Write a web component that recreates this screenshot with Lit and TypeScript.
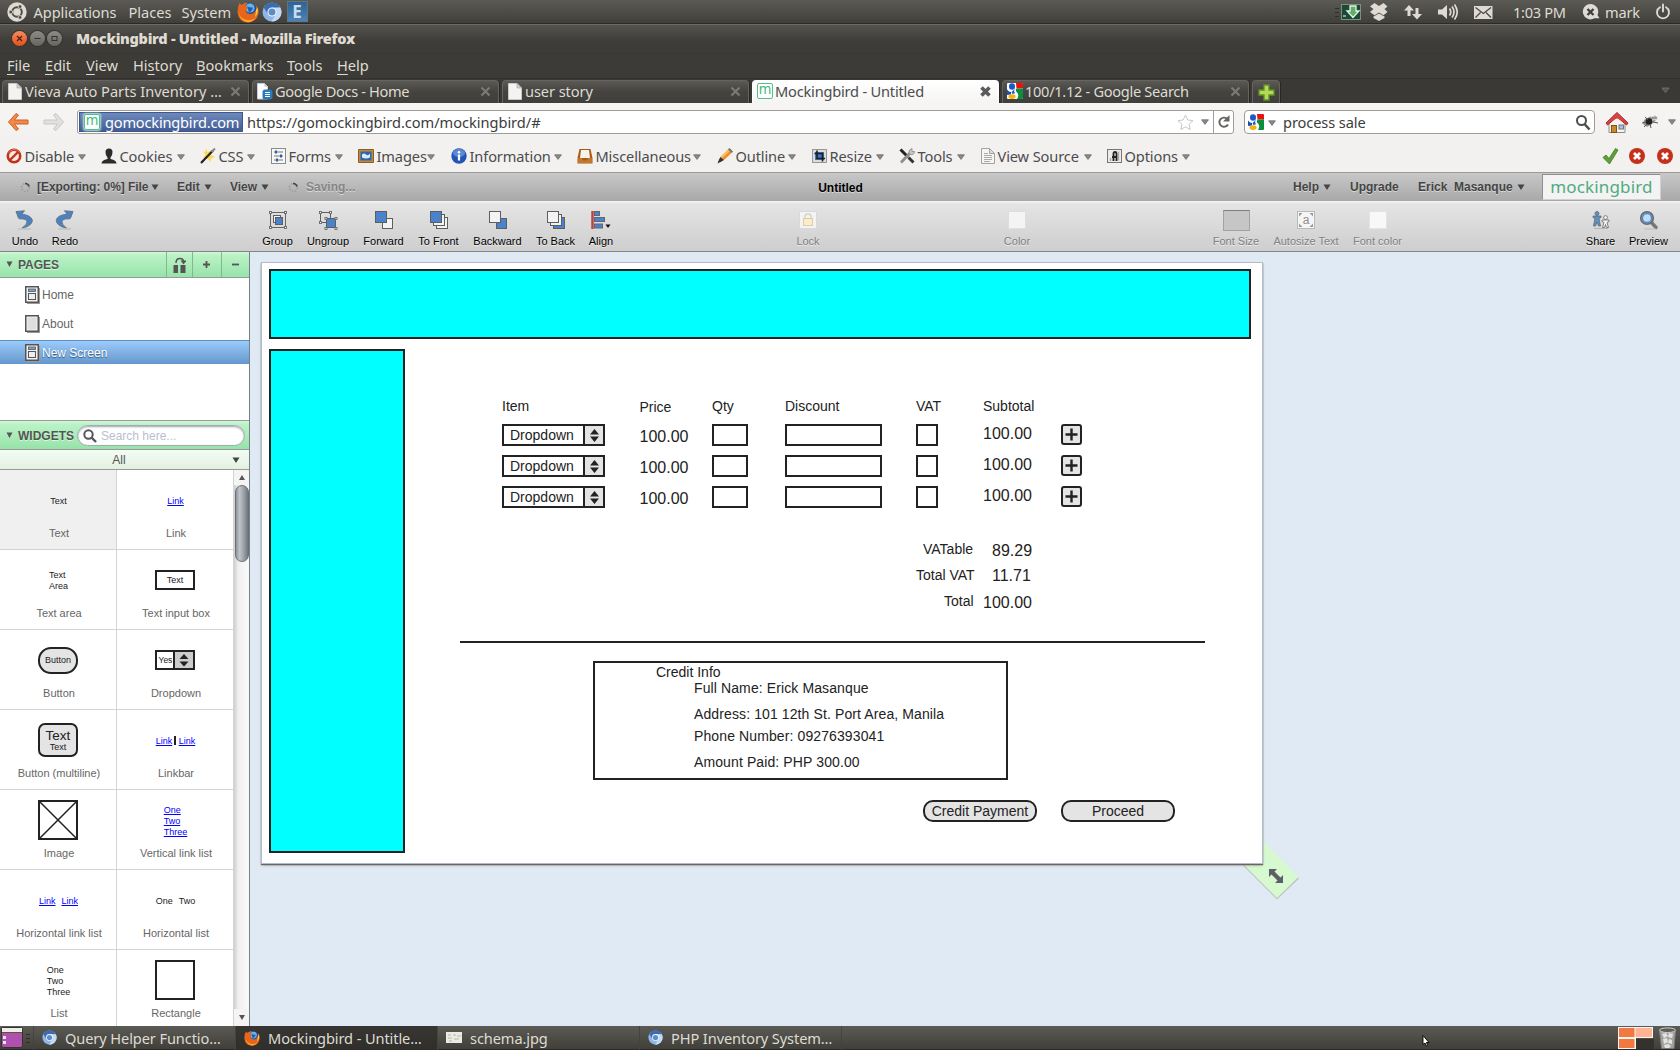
import { LitElement, html, svg, css, nothing } from "lit";
import { customElement } from "lit/decorators.js";
import { classMap } from "lit/directives/class-map.js";
import { styleMap } from "lit/directives/style-map.js";

const icon = (w: number, h: number, body: unknown, cls = "ic") =>
  html`<svg class=${cls} width=${w} height=${h} viewBox="0 0 ${w} ${h}">${body}</svg>`;

const caret = html`<svg class="caret" width="8" height="6" viewBox="0 0 8 6"><path d="M.6.8h6.8L4 5.4z" fill="#8a8a88" stroke="#6c6c6a" stroke-width=".8"/></svg>`;
const darkCaret = html`<svg class="dcaret" width="8" height="6" viewBox="0 0 8 6"><path d="M.5.5h7L4 6z" fill="#444"/></svg>`;

const firefox = (s: number) => html`<svg class="ic" width=${s} height=${s} viewBox="0 0 22 22">
  <circle cx="11.5" cy="10" r="8.6" fill="#1f4f9c"/><circle cx="13" cy="7" r="4.6" fill="#69b4e8"/>
  <path d="M10 5q3 2 6 1.500-1 4-4 5z" fill="#1d5fae"/>
  <path d="M2.500 2q1.500 2 2.200 1.800Q8 .8 11 2 8 3.500 8.600 5.600q2 .4 2.400 1.800-1.800.8-2.400 2 .4 2.600 3.600 3.400 4.400 1 7-3.800Q20 5 17.500 2.500q4.500 4 4 9.500-1 8-9.500 9.500Q2 22 .6 12 .2 7 2.500 2z" fill="#e8661b"/>
  <path d="M1.500 9q0 7 6 9.500 7 2.500 11.500-2.500-3 6-9.500 5Q1.500 18.500 1.500 9z" fill="#f9b02c"/>
  <path d="M20.500 6q1.500 6-2.500 10 1.200-4 .8-6.500z" fill="#fbc93f"/></svg>`;

const chromium = (s: number) => html`<svg class="ic" width=${s} height=${s} viewBox="0 0 20 20">
  <circle cx="10" cy="10" r="9.500" fill="#8fb6e4"/>
  <path d="M1.700 5.400A9.500 9.500 0 0 1 18.300 5.500L10 5.700 6 12z" fill="#3c6cb0"/>
  <path d="M18.300 5.500A9.500 9.500 0 0 1 9.500 19.500L14 12 10 5.700z" fill="#c3daf4"/>
  <circle cx="10" cy="10" r="4.600" fill="#f2f7fd"/><circle cx="10" cy="10" r="3.500" fill="#5d8ccb"/></svg>`;

const google = icon(16, 16, svg`<rect width="16" height="16" rx="1" fill="#fff"/>
  <path d="M9 0h6a1 1 0 0 1 1 1v4.500H9.500z" fill="#e8130c"/><path d="M9.500 5.500H16V15a1 1 0 0 1-1 1H10q2.500-4 0-6.500-2-2-.5-4z" fill="#0b8f3c"/>
  <path d="M0 6.500q2 2.500 4 2.500v2.500L0 12z" fill="#1550bd"/>
  <ellipse cx="5" cy="3.500" rx="3" ry="3.300" fill="#1c58c7"/><path d="M8 6q-2 3 .5 4l-3 1-1-2z" fill="#1c58c7"/>
  <ellipse cx="5" cy="13.600" rx="3.600" ry="2.300" fill="#f5b313"/>`);

const page = icon(14, 17, svg`<path d="M.5.500h8.500l4.500 4.500v11.500H.5z" fill="#f3f3f2" stroke="#c9c8c4"/><path d="M9 .5v4.500h4.500z" fill="#cfcecb" stroke="#aaa9a5" stroke-width=".7"/>`);
const docs = icon(16, 17, svg`<path d="M.5.500h7l3 3v12.500H.5z" fill="#fff" stroke="#ccd"/><path d="M7.500.5v3h3z" fill="#bbc"/>
  <rect x="5.500" y="6.500" width="10" height="10" rx="2.500" fill="#2a79b8"/><path d="M8 9.500h5M8 11.500h5M8 13.500h5" stroke="#fff"/>`);
const mark = html`<span class="m-ico">m</span>`;

const tabs = [
  { label: "Vieva Auto Parts Inventory …", ico: page, active: false, track: 0 },
  { label: "Google Docs - Home", ico: docs, active: false, track: -0.34 },
  { label: "user story", ico: page, active: false, track: -0.08 },
  { label: "Mockingbird - Untitled", ico: mark, active: true, track: -0.2 },
  { label: "100/1.12 - Google Search", ico: google, active: false, track: -0.3 },
];

const menus: [string, number, string, string][] = [
  ["", 38, "F", "ile"], ["", 41, "E", "dit"], ["", 47, "V", "iew"], ["Hi", 63, "s", "tory"],
  ["", 91, "B", "ookmarks"], ["", 50, "T", "ools"], ["", 40, "H", "elp"],
];

const devIcons = {
  disable: icon(16, 16, svg`<circle cx="8" cy="8" r="7.500" fill="#c2321c"/><circle cx="8" cy="8" r="4.900" fill="#f6e9e6"/><path d="M4 12 12 4" stroke="#c2321c" stroke-width="2.400"/><path d="M2.500 5Q4.500 1.500 8 1.500t5.500 3" fill="none" stroke="#e58473" stroke-width=".8"/>`),
  cookies: icon(16, 16, svg`<path d="M4.500 4Q4.500.5 8 .5t3.500 3.500Q11.500 8 9.500 9.500v1.500q6 1 6 4.500H.5q0-3.500 6-4.500V9.500Q4.500 8 4.500 4z" fill="#2b2b2a"/>`),
  css: icon(16, 16, svg`<path d="M6 0l1.500 4 5-1.500L11 7l4 2-4 1.500-.5 3.500L8 11l-5-1 2.500-3L3 3l2.500 1z" fill="#fbd955"/><path d="M1 15 13 2.500" stroke="#222" stroke-width="2.200"/><path d="M11.500 4 15 .5" stroke="#888" stroke-width="2"/>`),
  forms: icon(15, 16, svg`<rect x=".5" y=".5" width="14" height="15" fill="#f7f7f6" stroke="#8b8b88"/><path d="M3 4h9M3 8h9M3 12h9" stroke="#777"/><path d="M5 2.500v3M10 6.500v3M6 10.500v3" stroke="#2f5fae" stroke-width="2"/>`),
  images: icon(16, 14, svg`<rect width="16" height="14" rx="1" fill="#8b5d22"/><rect x="1" y="1" width="14" height="12" fill="#c08a3e"/><rect x="2.500" y="2.500" width="11" height="9" fill="#2c64ae"/><path d="M4 5.500q2-2 4 0t4-1v4q-4 2-8 0z" fill="#dbe8f7"/>`),
  information: icon(16, 16, svg`<circle cx="8" cy="8" r="7.700" fill="#2455b4"/><ellipse cx="8" cy="5" rx="6" ry="4" fill="#5d88d4"/><circle cx="8" cy="4.200" r="1.300" fill="#fff"/><path d="M8 6.500V12.500" stroke="#fff" stroke-width="2.200"/>`),
  misc: icon(16, 16, svg`<path d="M2.500 1h11l2 9v5.500H.5V10z" fill="#a65b18"/><path d="M4 2h8l1 8H3z" fill="#f8f3ea"/><path d="M1 10h4q0 2.500 3 2.500t3-2.500h4v5H1z" fill="#c4762c"/>`),
  outline: icon(16, 16, svg`<path d="M12 .5 15.500 4 7 12 3.500 9z" fill="#f08c1e"/><path d="M12 .5l1.700 1.700L5 10.500 3.500 9z" fill="#ffbb66"/><path d="M3.500 9 7 12l-2.500 1.500L.5 15.500l1.500-4z" fill="#333"/><path d="M11 1.500 12.500 0 16 3.500l-1.500 1.500z" fill="#777"/>`),
  resize: icon(15, 14, svg`<rect x=".5" y=".5" width="14" height="13" fill="#dcdcda" stroke="#999"/><rect x="3" y="3" width="9" height="8" fill="#3e76c4"/><path d="M5 1.500V9.500h8M2.500 4.500H10.500v8" fill="none" stroke="#1d1d1d" stroke-width="1.600"/>`),
  tools: icon(16, 16, svg`<path d="M1.500 1.500 9 9" stroke="#222" stroke-width="3"/><path d="M9.500 9.500l5 5" stroke="#333" stroke-width="3"/><path d="M2 14.500 11 5" stroke="#8e8e8c" stroke-width="2.800"/><path d="M10 5q-.5-3.500 3-4.500v3h2.500Q15 7.500 11 6.500z" fill="#c7c7c5" stroke="#888" stroke-width=".8"/>`),
  source: icon(14, 16, svg`<path d="M.5.500h8l5 5v10H.5z" fill="#f5f5f4" stroke="#a2a29e"/><path d="M8.500.5v5h5z" fill="#ddd" stroke="#a2a29e"/><path d="M3 5.500h4M3 7.500h8M3 9.500h8M3 11.500h8M3 13.500h6" stroke="#aaa"/>`),
  options: icon(15, 14, svg`<rect x=".5" y=".5" width="14" height="13" fill="#ecebe8" stroke="#777"/><path d="M3.500 9V12M11.500 2.500v9" stroke="#aaa" stroke-width="1.500"/><path d="M6.500 12V4.500Q6.500 3 8 3t1.500 1.500V12M5 8h5" fill="none" stroke="#222" stroke-width="1.800"/>`),
};

/* icon, label, cell width, width up to the end of the caret */
const dev: [keyof typeof devIcons, string, number, number][] = [
  ["disable", "Disable", 95, 80], ["cookies", "Cookies", 99, 84], ["css", "CSS", 71, 55], ["forms", "Forms", 87, 72],
  ["images", "Images", 93, 77], ["information", "Information", 126, 111], ["misc", "Miscellaneous", 140, 124],
  ["outline", "Outline", 95, 79], ["resize", "Resize", 87, 72], ["tools", "Tools", 82, 66],
  ["source", "View Source", 126, 111], ["options", "Options", 90, 83],
];

const sq = (x: number, y: number, s: number, fill: string) =>
  svg`<rect x=${x} y=${y} width=${s} height=${s} fill=${fill} stroke="#5e5e5e"/>`;
const B = "#4a82cc";
const W = "#f3f3f3";
const handles = (x: number, y: number, s: number) =>
  [[x, y], [x + s, y], [x, y + s], [x + s, y + s]].map(([a, b]) => svg`<rect x=${a - 1} y=${b - 1} width="2" height="2" fill="#fff" stroke="#666" stroke-width=".9"/>`);

const toolIcons: Record<string, unknown> = {
  Undo: svg`<path d="M1 1.500 9.500.8 6.800 4.200Q16 5 17.500 10.500 16.500 16.500 7 18q5.500-3.500 5-6.500-.8-3-7.200-2.600L3.500 8.200z" fill="#4b82c4" stroke="#666f7c" stroke-width=".9"/><path d="M3 19h13" stroke="#b5b5b5"/>`,
  Redo: svg`<path d="M18 1.500 9.500.8 12.200 4.200Q2 5 1.200 10.500 2 16.500 11.500 18 6.500 14.500 7 11.500q.8-3 7.200-2.600L15.500 8.200z" fill="#4b82c4" stroke="#666f7c" stroke-width=".9"/><path d="M3 19h13" stroke="#b5b5b5"/>`,
  Group: svg`<rect x="2.500" y="2.500" width="15" height="15" fill="none" stroke="#666"/>${sq(5.5, 5.5, 7, W)}${sq(7.5, 7.5, 7, B)}${handles(2.5, 2.5, 15)}`,
  Ungroup: svg`${sq(2.5, 2.5, 10, "none")}${handles(2.5, 2.5, 10)}${sq(8.5, 8.5, 9, B)}${handles(8, 8.5, 10)}`,
  Forward: svg`${sq(8.5, 8.5, 10, W)}${sq(1.5, 1.5, 11, B)}`,
  "To Front": svg`${sq(7.5, 7.5, 11, W)}${sq(4.5, 4.5, 11, W)}${sq(1.5, 1.5, 11, B)}`,
  Backward: svg`${sq(8.5, 8.5, 10, B)}${sq(1.5, 1.5, 11, W)}`,
  "To Back": svg`${sq(7.5, 7.5, 11, B)}${sq(4.5, 4.5, 11, W)}${sq(1.5, 1.5, 11, W)}`,
  Align: svg`<path d="M1.500 1v18" stroke="#b44" stroke-width="2.500"/><g fill="${B}" stroke="#666"><rect x="3.500" y="1.500" width="5" height="4"/><rect x="3.500" y="7.500" width="10" height="4"/><rect x="3.500" y="14" width="8" height="4"/></g><path d="M14.500 14.500h5l-2.500 3.500z" fill="#111"/>`,
  Lock: svg`<rect x="1.500" y="1.500" width="17" height="17" fill="#f3f3f3" stroke="#d9d9d9"/><path d="M7 9V6.500q0-2.500 3-2.500t3 2.500V9" fill="none" stroke="#d5d2c8" stroke-width="1.400"/><rect x="5.500" y="8.500" width="9" height="7" fill="#faedc8" stroke="#dccfa6"/>`,
  Color: svg`<rect x="1.500" y="1.500" width="17" height="17" fill="#f4f4f4" stroke="#dedede"/>`,
  "Font color": svg`<rect x="1.500" y="1.500" width="17" height="17" fill="#f8f8f8" stroke="#e4e4e4"/>`,
  "Autosize Text": svg`<rect x="1.500" y="1.500" width="17" height="17" fill="#f5f5f5" stroke="#b9b9b9"/><path d="M3 3h3.500L3 6.500zM17 3v3.500L13.500 3zM3 17v-3.500L6.500 17zM17 17h-3.500l3.500-3.500z" fill="#999"/><text x="10" y="14" font-size="12" text-anchor="middle" fill="#8d8d8d" font-family="Liberation Sans, sans-serif">a</text>`,
  Share: svg`<g fill="#5b92cc" stroke="#666" stroke-width=".8"><circle cx="6" cy="3.500" r="2"/><path d="M2 6h8v1.500L8 8.500 9.500 16h-2L6 12l-1.500 4h-2L4 8.500 2 7.500z"/></g><g fill="#f5f5f5" stroke="#666" stroke-width=".8"><circle cx="14.500" cy="7.500" r="1.900"/><path d="M11 10h7v1.500l-2 1 1.500 5h-2l-1-3-1 3h-2l1.500-5-2-1z"/></g><path d="M3 18.500h14" stroke="#b5b5b5"/>`,
  Preview: svg`<path d="M12 12l5 5.500" stroke="#777" stroke-width="3.500" stroke-linecap="round"/><circle cx="8" cy="8" r="6.200" fill="#bfdcf4" stroke="#6b6b6b" stroke-width="1.800"/><circle cx="8" cy="8" r="4.600" fill="none" stroke="#4f8ad0" stroke-width="1.500"/><path d="M5 19h12" stroke="#bbb"/>`,
};

/* label, cell width, leading gap, disabled */
const tools: [string, number, number, boolean][] = [
  ["Undo", 40, 5, false], ["Redo", 40, 0, false],
  ["Group", 50, 167.5, false], ["Ungroup", 50, .5, false], ["Forward", 56, 2.5, false], ["To Front", 54, 0, false],
  ["Backward", 60, 2, false], ["To Back", 50, 3, false], ["Align", 40, .5, false],
  ["Lock", 40, 167, true], ["Color", 40, 169, true],
  ["Font Size", 60, 169, true], ["Autosize Text", 80, 0, true], ["Font color", 60, 1.5, true],
  ["Share", 46, 170, false], ["Preview", 50, 0, false],
];

const frame = (w: number, h: number, body: unknown) => icon(w, h, body, "pv");
const widgets: { name: string; view: unknown; on?: boolean }[] = [
  { name: "Text", view: html`<span>Text</span>`, on: true },
  { name: "Link", view: html`<a>Link</a>` },
  { name: "Text area", view: html`<span class="stack">Text<br>Area</span>` },
  { name: "Text input box", view: html`<span class="shape w-input">Text</span>` },
  { name: "Button", view: html`<span class="shape w-btn">Button</span>` },
  { name: "Dropdown", view: html`<span class="shape w-drop"><i>Yes</i><b>${icon(10, 13, svg`<path d="M5 0l4.500 5h-9zM5 12.500l4.500-5h-9z" fill="#222"/>`)}</b></span>` },
  { name: "Button (multiline)", view: html`<span class="shape w-multi"><i>Text</i><em>Text</em></span>` },
  { name: "Linkbar", view: html`<a>Link</a><u class="bar"></u><a>Link</a>` },
  { name: "Image", view: frame(40, 40, svg`<rect x="1" y="1" width="38" height="38" fill="#fff" stroke="#222" stroke-width="2"/><path d="M1 1 39 39M39 1 1 39" stroke="#222" stroke-width="1.500"/>`) },
  { name: "Vertical link list", view: html`<span class="stack"><a>One</a><br><a>Two</a><br><a>Three</a></span>` },
  { name: "Horizontal link list", view: html`<a>Link</a><s></s><a>Link</a>` },
  { name: "Horizontal list", view: html`<span>One</span><s></s><span>Two</span>` },
  { name: "List", view: html`<span class="stack">One<br>Two<br>Three</span>` },
  { name: "Rectangle", view: frame(40, 40, svg`<rect x="1" y="1" width="38" height="38" fill="#fff" stroke="#222" stroke-width="2"/>`) },
];

/* Texts placed on the design canvas: x, vertical centre, size, content */
const labels: [number, number, number, string][] = [
  [240, 143, 14, "Item"], [377.5, 144, 14, "Price"], [450, 143, 14, "Qty"], [523, 143, 14, "Discount"], [654, 143, 14, "VAT"], [721, 143, 14, "Subtotal"],
  [661, 286, 14, "VATable"], [730, 288, 16, "89.29"], [654, 312, 14, "Total VAT"], [730, 313, 16, "11.71"], [682, 338, 14, "Total"], [721, 340, 16, "100.00"],
  [394, 409, 14, "Credit Info"],
];
const credit: [number, string][] = [
  [425, "Full Name: Erick Masanque"], [451, "Address: 101 12th St. Port Area, Manila"],
  [473, "Phone Number: 09276393041"], [499, "Amount Paid: PHP 300.00"],
];
const boxes: [number, number, number, number, string][] = [
  [7, 6, 982, 70, "cyan"], [7, 86, 136, 504, "cyan"], [331, 398, 415, 119, ""],
];

@customElement("browser-chrome")
class BrowserChrome extends LitElement {
  static styles = css`
    :host { display: block; height: 173px; font: 14.600px/20px "Noto Sans", sans-serif; color: #dfdbd2; }
    * { box-sizing: border-box; }
    svg { display: block; flex: none; }
    .row { display: flex; align-items: center; white-space: nowrap; }
    .panel { height: 24px; background: linear-gradient(#5b5a55, #403f3a); border-bottom: 1px solid #2b2a27; padding: 0 9px 0 7px; }
    .panel > span { flex: none; }
    .app { width: 95px; margin-left: 6.500px; letter-spacing: -.080px; } .pl { width: 53px; } .sy { width: 55px; }
    .g3 { margin-left: 3px; } .g5 { margin-left: 5px; }
    .e { width: 21px; height: 21px; background: linear-gradient(#2f6392, #4a83b5); border: 1px solid #5f7688; color: #c9dcec; font-weight: 700; font-size: 17px; line-height: 19px; text-align: center; }
    .row > .grow, .grow { flex: 1; }
    .clock { width: 69px; letter-spacing: -.300px; } .chat { width: 23px; } .mark { width: 50px; letter-spacing: -.200px; }
    .title { height: 29px; background: linear-gradient(#54534e, #3e3d39 55%, #3c3b37); border-top: 1px solid #6a6962; padding: 0 0 2px 12px; font-weight: 700; }
    .wb { width: 15px; height: 15px; border-radius: 50%; margin-right: 2.700px; background: linear-gradient(#8d8c86, #66655f); display: flex; align-items: center; justify-content: center; box-shadow: 0 0 0 1px #34332f; }
    .wb.x { background: linear-gradient(#f68b5d, #e2521b); }
    .title b { margin-left: 11px; letter-spacing: -.320px; }
    .menu { height: 25px; background: #3c3b37; padding: 0 0 2px 7px; border-top: 1px solid #383733; }
    .menu u { text-underline-offset: 3px; text-decoration-thickness: 1px; }
    .menu span { flex: none; }
    .tabs { height: 25px; background: #3a3935; border-top: 1px solid #32312e; padding-left: 2px; align-items: flex-end; }
    .tab { width: 247px; height: 23px; margin-right: 3px; padding: 0 7px 1.500px 4px; display: flex; align-items: center; background: linear-gradient(#5a5954, #44433f 50%, #403f3b); border: 1px solid #65645f; border-bottom: 0; border-radius: 4px 4px 0 0; box-shadow: 1px 0 0 #282724; }
    .tab .t { flex: 1; margin-left: 2px; overflow: hidden; }
    .tab .slot { width: 16px; display: flex; justify-content: center; }
    .tab.on { background: linear-gradient(#fff, #f5f4f3); color: #4c4c4c; border-color: #fff; }
    .plus { width: 28px; padding: 0 5px; }
    .m-ico { width: 16px; height: 16px; flex: none; border: 1px solid #55bf8c; border-radius: 2px; background: #fff; color: #3dbb7e; font-size: 13.500px; line-height: 11px; text-align: center; display: block; letter-spacing: 0; }
    .nav { height: 38px; background: linear-gradient(#f6f5f4, #f2f1f0); padding: 0 4px 0 7px; color: #3c3c3c; }
    .url { width: 1157px; height: 24px; margin-left: 12px; background: #fff; border: 1px solid #a09d98; border-radius: 3px; display: flex; align-items: center; padding-left: 1px; }
    .site { width: 164px; height: 20px; background: linear-gradient(#6d89ba, #425c96); border: 1px solid #3d568c; color: #fff; display: flex; align-items: center; padding-left: 4px; letter-spacing: -.200px; }
    .site .m-ico { margin-right: 5px; box-shadow: 0 0 2px 1px #b8e6d0; }
    .addr { margin-left: 4px; flex: 1; letter-spacing: -.030px; }
    .reload { border-left: 1px solid #a09d98; height: 22px; width: 20px; margin-left: 4px; display: flex; align-items: center; justify-content: center; }
    .star { margin-right: 7px; }
    .search { width: 351px; height: 24px; margin-left: 10px; background: #fff; border: 1px solid #a09d98; border-radius: 4px; display: flex; align-items: center; padding: 0 3px; letter-spacing: -.100px; }
    .search .caret { margin: 2px 7px 0 4px; }
    .home { margin-left: -2px; margin-right: 2px; }
    .dev { height: 32px; background: #f2f1f0; border-bottom: 1px solid #9c9b98; padding: 0 6px 2px; color: #4c4c4c; letter-spacing: -.120px; }
    .dev .cell { flex: none; }
    .dev .in { display: flex; align-items: center; justify-content: space-between; }
    .dev .in span { display: flex; align-items: center; gap: 2.500px; }
    .dev .caret { margin-top: 2px; }
    .lastx { margin-left: 8px; }
    .end { margin-bottom: 3px; }
  `;

  render() {
    const c = "#dfdbd2";
    return html`
      <div class="row panel">
        ${icon(20, 20, svg`<circle cx="10" cy="10" r="9.700" fill="${c}"/><circle cx="10" cy="10" r="4.800" fill="none" stroke="#4d4c47" stroke-width="2"/><g fill="#4d4c47" stroke="${c}" stroke-width=".8"><circle cx="3.800" cy="10" r="1.900"/><circle cx="13" cy="4.600" r="1.900"/><circle cx="13" cy="15.400" r="1.900"/></g>`)}
        <span class="app">Applications</span><span class="pl">Places</span><span class="sy">System</span>
        ${firefox(22)}<span class="g3">${chromium(20)}</span><span class="e g5">E</span>
        <span class="grow"></span>
        ${icon(5, 14, svg`<path d="M0 3.500h4M0 7.500h4M0 11.500h4" stroke="#2e2d2a"/>`)}
        ${icon(22, 16, svg`<rect x="1.500" y=".5" width="19" height="15" fill="#1d4a35" stroke="#7b8f84"/><path d="M10 2h6v5h3L13 13.500 7 7h3z" fill="#5fae6b" stroke="#e8f5e8" stroke-width="1.300"/><path d="M3 12h3" stroke="#fff"/>`)}
        ${icon(151, 22, svg`<g fill="${c}"><path d="M12.500 2 17 5l4.500-3 4 3.500-3 2.500 3 3-4 3.300L17 11.500l-4.500 2.800L8 11l3.500-3L8 5.500z"/><path d="M11.500 15.500 17 12.500l5.500 3v1.500L17 20l-5.500-3z"/>
          <path d="M47 4l5 5.500h-3.500V15h-3V9.500H42z"/><path d="M55 18.500l5-5.500h-3.500V7h-3v6H50z"/>
          <path d="M76 8.500h4l5-4.500v14l-5-4.500h-4z"/><rect x="112" y="5" width="18.500" height="13"/></g>
          <path d="M87.500 7.500q2.500 3.500 0 7M90 5.500q4 5.500 0 11M92.500 3.500q5.500 7.500 0 15" fill="none" stroke="${c}" stroke-width="1.700"/>
          <path d="M113.500 6.500l7.800 6 7.800-6M113.500 16.500l5-5M129 16.500l-5-5" fill="none" stroke="#4a4944" stroke-width="1.300"/>`)}
        <span class="clock">1:03 PM</span>
        <span class="chat">${icon(18, 18, svg`<path d="M8.500 1a7.700 7.700 0 1 0 4 14.300h5L15.500 12A7.700 7.700 0 0 0 8.500 1z" fill="${c}"/><path d="M5.500 6l6 6M11.500 6l-6 6" stroke="#403f3a" stroke-width="2.400"/>`)}</span>
        <span class="mark">mark</span>
        ${icon(16, 18, svg`<path d="M5 4.200a6 6 0 1 0 6 0M8 1.500v7" fill="none" stroke="${c}" stroke-width="1.900" stroke-linecap="round"/>`)}
      </div>
      <div class="row title">
        <span class="wb x">${icon(9, 9, svg`<path d="M2 2l5 5M7 2 2 7" stroke="#4a2010" stroke-width="1.200"/>`)}</span>
        <span class="wb">${icon(9, 9, svg`<path d="M1.500 4.500h6" stroke="#33322e"/>`)}</span>
        <span class="wb">${icon(9, 9, svg`<rect x="2" y="2.500" width="5" height="4" fill="none" stroke="#33322e"/>`)}</span>
        <b>Mockingbird - Untitled - Mozilla Firefox</b>
      </div>
      <div class="row menu">
        ${menus.map(([pre, w, k, post]) => html`<span style=${styleMap({ width: w + "px" })}>${pre}<u>${k}</u>${post}</span>`)}
      </div>
      <div class="row tabs">
        ${tabs.map(t => html`<div class=${classMap({ tab: true, on: t.active })}>
          <span class="slot">${t.ico}</span><span class="t" style=${styleMap({ letterSpacing: t.track + "px" })}>${t.label}</span>
          ${icon(11, 11, svg`<path d="M1.500 1.500l8 8M9.500 1.500l-8 8" stroke=${t.active ? "#5a5a5a" : "#7b7a75"} stroke-width=${t.active ? 3.6 : 2.2}/>`)}
        </div>`)}
        <div class="tab plus">${icon(17, 17, svg`<path d="M6 1h5v5h5v5h-5v5H6v-5H1V6h5z" fill="#b5d957" stroke="#5f9324" stroke-width="1.300"/>`)}</div>
        <span class="grow"></span>
        <svg class="end" width="22" height="18" viewBox="0 0 22 18"><path d="M4 6h7L7.500 10.500z" fill="#55544f" stroke="#7b7a75" stroke-width=".8"/></svg>
      </div>
      <div class="row nav">
        ${icon(22, 20, svg`<path d="M9 1.500 1.500 10 9 18.500l2.500-1.500-4-5H21V8H7.500l4-5z" fill="#f08a4b" stroke="#cf5f22" stroke-linejoin="round"/>`)}
        <svg width="36" height="20" viewBox="0 0 36 20"><path d="M27 1.500 34.500 10 27 18.500l-2.500-1.500 4-5H15V8h13.500l-4-5z" fill="#e1e0de" stroke="#c9c8c5" stroke-linejoin="round"/></svg>
        <div class="url">
          <div class="site">${mark}gomockingbird.com</div>
          <span class="addr">https://gomockingbird.com/mockingbird/#</span>
          <svg class="star" width="17" height="17" viewBox="0 0 17 17"><path d="M8.500 1l2.300 5 5.200.6-3.900 3.600 1.100 5.300-4.700-2.700-4.700 2.700 1.100-5.300L1 6.600 6.200 6z" fill="#fff" stroke="#c8c8c6"/></svg>
          ${caret}
          <span class="reload">${icon(14, 14, svg`<path d="M11 9.500A4.600 4.600 0 1 1 10 3.700" fill="none" stroke="#666560" stroke-width="1.900"/><path d="M12.500 0v6.500H6z" fill="#666560"/>`)}</span>
        </div>
        <div class="search">
          ${google}${caret}<span class="grow">process sale</span>
          ${icon(16, 17, svg`<circle cx="6.500" cy="6.500" r="4.500" fill="none" stroke="#4e4e4c" stroke-width="2"/><path d="M9.500 10l5 5.500" stroke="#4e4e4c" stroke-width="2.600"/>`)}
        </div>
        <svg class="home" width="36" height="24" viewBox="0 0 36 24"><path d="M16 12 24 5l8 7v10.500H16z" fill="#f6f4f1" stroke="#8e8b86"/><path d="M13 13 24 2.500 35 13l-1.500 2L24 7l-9.500 8z" fill="#d9433f" stroke="#a32b2b"/><path d="M16 11.500 24 4l8 7.500-8-3z" fill="#d9433f"/><rect x="18.500" y="15.500" width="5" height="7" fill="#c98a2e" stroke="#7e5516"/><rect x="26" y="15" width="4.500" height="4" fill="#9cc4e6" stroke="#777"/></svg>
        <svg width="28" height="16" viewBox="0 0 28 16"><path d="M13 6l5-3 6-1q4 1 1 4l-4 4-5 3-4-3z" fill="#777" opacity=".75"/><circle cx="18" cy="7.500" r="3.300" fill="#222"/><path d="M11 9l4-1M13 13l3-3M20 14l-1-4M27 9l-5-1M14 3l3 3" stroke="#555"/><path d="M20 3l5-1.500M21 6l6-1" stroke="#ddd"/></svg>
        <span class="grow"></span>${caret}
      </div>
      <div class="row dev">
        ${dev.map(([k, label, w, inner]) => html`<div class="cell" style=${styleMap({ width: w + "px" })}>
          <div class="in" style=${styleMap({ width: inner + "px" })}><span>${devIcons[k]}${label}</span>${caret}</div></div>`)}
        <span class="grow"></span>
        ${icon(48, 18, svg`<path d="M3 10.500 6 8l3 3.500 6.500-10L18 3 9.500 17z" fill="#5f9f37" stroke="#3f7a20" stroke-width=".8"/>
          <circle cx="37" cy="9" r="8" fill="#c62f1a"/><path d="M34 6l6 6M40 6l-6 6" stroke="#fff" stroke-width="2.800"/>`)}
        ${icon(18, 18, svg`<circle cx="9" cy="9" r="8" fill="#c62f1a"/><path d="M6 6l6 6M12 6l-6 6" stroke="#fff" stroke-width="2.800"/>`, "lastx")}
      </div>`;
  }
}

@customElement("editor-bars")
class EditorBars extends LitElement {
  static styles = css`
    :host { display: block; height: 79px; font: 12px/16px "Liberation Sans", Arial, sans-serif; color: #444; }
    * { box-sizing: border-box; }
    svg { display: block; flex: none; }
    .one { height: 28px; background: linear-gradient(#c8c8c8, #a8a8a8); display: grid; grid-template-columns: 1fr auto 1fr; align-items: center; font-weight: 700; text-shadow: 0 1px 0 rgba(255,255,255,.5); white-space: nowrap; }
    .left, .right { display: flex; align-items: center; }
    .left { padding-left: 20px; }
    .right { justify-content: flex-end; padding-right: 19px; }
    .left > *, .right > * { flex: none; }
    .item { display: flex; align-items: center; justify-content: space-between; }
    .exp { width: 122px; margin-left: 6px; letter-spacing: -.060px; } .ed { width: 35px; margin-left: 18px; } .vi { width: 39px; margin-left: 18px; }
    .spin2 { margin-left: 19px; } .saving { margin-left: 7px; color: #858585; }
    .mid { color: #000; padding-top: 1px; transform: translateX(.5px); }
    .hp { width: 38px; } .up { margin-left: 19px; width: 48px; } .us { margin-left: 20px; width: 107px; white-space: pre; }
    .logo { margin-left: 17px; width: 119px; height: 26px; background: #f3f3f3; border: 1px solid #999; border-color: #8f8f8f #d0d0d0 #d0d0d0 #8f8f8f; color: #50ab7f; font: 17px/23px "Noto Sans", sans-serif; text-align: center; letter-spacing: .150px; text-shadow: none; }
    .two { height: 51px; background: linear-gradient(#f5f5f5, #e4e4e4 3px, #cfcfcf 96%); border-bottom: 1px solid #858585; display: flex; font-size: 11px; color: #000; white-space: nowrap; padding-top: 9px; }
    .tool { flex: none; display: flex; flex-direction: column; align-items: center; gap: 3px; text-shadow: 0 1px 0 rgba(255,255,255,.6); }
    .off { color: #808080; }
    .size { width: 27px; height: 21px; background: #c6c6c6; border: 1px solid #a2a2a2; border-top-color: #7f7f7f; }
    .size + span { margin-top: -1px; }
  `;
  render() {
    const spin = icon(11, 11, svg`<g fill="none" stroke-width="1.600"><circle cx="5.500" cy="5.500" r="4" stroke="#9a9a9a" stroke-dasharray="1.500 1.600"/><path d="M5 1.500a4 4 0 0 1 4 3" stroke="#444"/></g>`);
    return html`
      <div class="one">
        <div class="left">${spin}<span class="item exp">[Exporting: 0%] File ${darkCaret}</span><span class="item ed">Edit ${darkCaret}</span><span class="item vi">View ${darkCaret}</span><span class="spin2">${spin}</span><span class="saving">Saving...</span></div>
        <div class="mid">Untitled</div>
        <div class="right"><span class="item hp">Help ${darkCaret}</span><span class="up">Upgrade</span><span class="item us">Erick  Masanque${darkCaret}</span><span class="logo">mockingbird</span></div>
      </div>
      <div class="two">
        ${tools.map(([name, w, gap, off]) => html`<div class=${classMap({ tool: true, off })} style=${styleMap({ width: w + "px", marginLeft: gap + "px" })}>
          ${name === "Font Size" ? html`<span class="size"></span>` : icon(20, 20, toolIcons[name])}<span>${name}</span></div>`)}
      </div>`;
  }
}

@customElement("side-panel")
class SidePanel extends LitElement {
  static styles = css`
    :host { display: flex; flex-direction: column; width: 249px; flex: none; background: #fff; border-right: 1px solid #77808a; font: 12px/16px "Liberation Sans", Arial, sans-serif; color: #666; overflow: hidden; }
    * { box-sizing: border-box; }
    svg { display: block; flex: none; }
    .head { display: flex; align-items: center; background: linear-gradient(#d3f8da, #bbf3c6 3px, #97e3aa); border-bottom: 1px solid #999; font-weight: 700; color: #555; padding-left: 6px; text-shadow: 0 1px 0 #d6f9de; flex: none; }
    .pages { height: 26px; } .wid { height: 30px; border-top: 1px solid #999; padding-top: 1px; }
    .head .tri { margin-right: 5px; }
    .nm { flex: 1; }
    .hb { height: 25px; border-left: 1px solid #7fb98e; display: flex; align-items: center; justify-content: center; padding-right: 1px; }
    .b1 { width: 26px; } .b2 { width: 29px; } .b3 { width: 28px; }
    .list { height: 142px; padding-top: 4px; flex: none; }
    .pg { height: 24px; margin-bottom: 5px; padding-left: 25px; display: flex; align-items: center; gap: 2px; border-top: 1px solid transparent; }
    .pg.on { background: linear-gradient(#9ccbfb, #6497cc); border-top-color: #5a8ec0; color: #fff; text-shadow: 0 1px 1px #33557a; }
    .find { width: 168px; height: 21px; margin-right: 4px; border-radius: 11px; background: #fff; border: 1px solid #a3abb5; box-shadow: inset 0 1px 2px #9aa3b5; display: flex; align-items: center; padding-left: 5px; color: #b8c0cf; font-weight: 400; gap: 4px; text-shadow: none; }
    .all { height: 20px; flex: none; background: linear-gradient(#f3fdf3, #e2f1e2); border-bottom: 1px solid #999; display: flex; align-items: center; padding-right: 9px; color: #555; }
    .all span { flex: 1; text-align: center; padding-left: 6px; }
    .body { flex: 1; min-height: 0; display: flex; overflow: hidden; }
    .grid { width: 234px; display: grid; grid-template-columns: 117px 117px; grid-auto-rows: 80px; overflow: hidden; flex: none; align-content: start; }
    .cell { border-right: 1px solid #d4d4d4; border-bottom: 1px solid #d4d4d4; display: flex; flex-direction: column; align-items: center; font-size: 11px; white-space: nowrap; }
    .cell > span { padding-left: 2px; }
    .cell.sel { background: #f0f0f0; }
    .view { height: 55px; padding-top: 7px; display: flex; align-items: center; justify-content: center; font-size: 9px; line-height: 11px; color: #222; padding-left: 1px; }
    .shape, .pv { margin: 0 1px 2px 0; }
    a { color: #00f; text-decoration: underline; }
    s { width: 6px; } .bar { width: 2px; height: 9px; background: #222; margin: 0 2.500px 2px 2px; }
    .w-input, .w-btn { width: 40px; height: 20px; border: 2px solid #222; display: flex; align-items: center; justify-content: center; }
    .w-input { padding-top: 1px; }
    .w-btn { height: 27px; border-radius: 13px; background: #e4e4e4; padding-top: 1px; }
    .w-drop { width: 40px; height: 20px; border: 2px solid #222; display: flex; }
    .w-drop i { flex: 1; font-style: normal; line-height: 17px; padding-left: 1.500px; font-size: 8.500px; }
    .w-drop b { width: 20px; border-left: 2px solid #222; background: #ccc; display: flex; align-items: center; justify-content: center; }
    .w-multi { width: 40px; height: 34px; border: 2px solid #222; border-radius: 7px; background: #e4e4e4; display: flex; flex-direction: column; align-items: center; padding-top: 4px; }
    .w-multi i { font: normal 13.500px/14px "Liberation Sans", sans-serif; } .w-multi em { font-style: normal; line-height: 9px; }
    .scroll { flex: 1; background: linear-gradient(90deg, #cfcfcf, #f0f0f0 30%, #fafafa); display: flex; flex-direction: column; align-items: center; justify-content: space-between; }
    .up { height: 15px; width: 100%; background: #f4f4f4; display: flex; align-items: center; justify-content: center; }
    .dn { height: 17px; width: 100%; background: #f4f4f4; display: flex; align-items: center; justify-content: center; }
    .thumb { width: 14px; height: 77px; border-radius: 7px; border: 1px solid #6b7077; background: linear-gradient(90deg, #8f959c, #c0c5ca 30%, #8a9098 80%, #6f757d); }
    .fill { flex: 1; }
  `;
  render() {
    const pageIcon = (full: boolean) => icon(15, 18, svg`<rect x="2" y="2" width="13" height="16" fill="#999"/><rect x=".75" y=".75" width="12.500" height="15.500" fill="#f3f3f3" stroke="#555" stroke-width="1.500"/>${full ? svg`<rect x="3.500" y="3" width="7" height="2.500" fill="#7da2cc" stroke="#555" stroke-width=".8"/><rect x="3.500" y="7.500" width="7" height="6" fill="#eee" stroke="#555"/>` : svg`<rect x="2.500" y="2.500" width="9" height="12" fill="#dedede"/>`}`);
    const tri = html`<svg class="tri" width="7" height="7" viewBox="0 0 7 7"><path d="M.5.500h6L3.500 6z" fill="#555"/></svg>`;
    return html`
      <div class="head pages">${tri}<span class="nm">PAGES</span>
        <span class="hb b1">${icon(13, 16, svg`<path d="M.5 8h4.500v8H.5zM7.500 8h5v8h-5z" fill="#555"/><path d="M3 6Q3 1.500 7 1.500q3 0 3.500 2.500" fill="none" stroke="#555" stroke-width="1.500"/><path d="M7.500 3.500h6l-3 4z" fill="#555"/>`)}</span>
        <span class="hb b2">${icon(9, 9, svg`<path d="M4.500 1v7M1 4.500h7" stroke="#555" stroke-width="1.800"/>`)}</span>
        <span class="hb b3">${icon(9, 9, svg`<path d="M1 4.500h7" stroke="#555" stroke-width="1.800"/>`)}</span></div>
      <div class="list">
        <div class="pg">${pageIcon(true)}Home</div><div class="pg">${pageIcon(false)}About</div><div class="pg on">${pageIcon(true)}New Screen</div>
      </div>
      <div class="head wid">${tri}<span class="nm">WIDGETS</span><span class="find">${icon(14, 14, svg`<circle cx="5.500" cy="5.500" r="4.200" fill="none" stroke="#555" stroke-width="2"/><path d="M8.500 8.500l4.500 4.500" stroke="#555" stroke-width="2.400"/>`)}Search here...</span></div>
      <div class="all"><span>All</span>${darkCaret}</div>
      <div class="body">
        <div class="grid">${widgets.map(w => html`<div class=${classMap({ cell: true, sel: !!w.on })}><div class="view">${w.view}</div><span>${w.name}</span></div>`)}</div>
        <div class="scroll"><span class="up">${icon(6, 5, svg`<path d="M3 0l3 5H0z" fill="#555"/>`)}</span><span class="thumb"></span><span class="fill"></span><span class="dn">${icon(6, 5, svg`<path d="M3 5l3-5H0z" fill="#555"/>`)}</span></div>
      </div>`;
  }
}

@customElement("design-canvas")
class DesignCanvas extends LitElement {
  static styles = css`
    :host { display: block; flex: 1; background: #e0eaf4; padding: 11px 0 0 12px; font: 14px/20px "Liberation Sans", Arial, sans-serif; color: #222; }
    * { box-sizing: border-box; }
    .bg { position: relative; z-index: 0; }
    .sheet { position: relative; width: 1000px; height: 600px; background: #fff; box-shadow: 0 0 0 1px #b3bcc6, 0 1px 1px 1px #666, 0 2px 3px #999; }
    .sheet > * { position: absolute; white-space: nowrap; }
    .sheet > .grip { left: 979px; top: 576px; z-index: -1; }
    .box { border: 2px solid #222; }
    .cyan { background: #0ff; }
    .drop { width: 103px; height: 22px; border: 2px solid #222; display: flex; left: 240px; }
    .drop span { flex: 1; padding-left: 6px; line-height: 18px; }
    .drop b { width: 20px; border-left: 2px solid #222; background: #e4e4e4; display: flex; align-items: center; justify-content: center; }
    .add { left: 799px; width: 21px; height: 21px; border: 2px solid #222; border-radius: 3px; background: #e4e4e4; }
    .add svg { display: block; }
    .num { font-size: 16px; }
    .info { left: 432px; letter-spacing: .110px; }
    .rule { left: 198px; top: 378px; width: 745px; height: 2px; background: #222; }
    .btn { top: 537px; width: 114px; height: 22px; border: 2px solid #222; border-radius: 10px; background: #e4e4e4; text-align: center; line-height: 18px; }
    .b1 { left: 661px; } .b2 { left: 799px; }
  `;
  render() {
    const px = (o: Record<string, number>) => styleMap(Object.fromEntries(Object.entries(o).map(([k, v]) => [k, v + "px"])));
    return html`<div class="bg"><div class="sheet">
      <svg class="grip" width="60" height="62" viewBox="0 0 60 62"><path d="M0 24.500 22 3.500l36 36-22 21z" fill="#a9b3ad" opacity=".7"/><path d="M0 23 22 2l35.500 36L36 59z" fill="#d6f9d0"/><path d="M28 30h8l-2.500 2.500 6 6L42 36v8h-8l2.500-2.500-6-6L28 38z" fill="#5d5f66"/></svg>
      ${boxes.map(([l, t, w, h, c]) => html`<div class="box ${c}" style=${px({ left: l, top: t, width: w, height: h })}></div>`)}
      ${[0, 1, 2].map(i => {
        const y = 161 + i * 31;
        return html`
          <div class="drop" style=${px({ top: y })}><span>Dropdown</span><b><svg width="11" height="13" viewBox="0 0 11 13"><path d="M5.500 0 10 5.500H1zM5.500 13 10 7.500H1z" fill="#222"/></svg></b></div>
          <div class="num" style=${px({ left: 377.5, top: y + 3 })}>100.00</div>
          <div class="box" style=${px({ left: 450, top: y, width: 36, height: 22 })}></div>
          <div class="box" style=${px({ left: 523, top: y, width: 97, height: 22 })}></div>
          <div class="box" style=${px({ left: 654, top: y, width: 22, height: 22 })}></div>
          <div class="num" style=${px({ left: 721, top: y })}>100.00</div>
          <div class="add" style=${px({ top: y })}><svg width="17" height="17" viewBox="0 0 17 17"><path d="M8.500 2.500v12M2.500 8.500h12" stroke="#222" stroke-width="2.400"/></svg></div>`;
      })}
      ${labels.map(([x, y, s, t]) => html`<div style=${px({ left: x, top: y - 10, fontSize: s })}>${t}</div>`)}
      ${credit.map(([y, t]) => html`<div class="info" style=${px({ top: y - 10 })}>${t}</div>`)}
      <div class="rule"></div>
      <div class="btn b1">Credit Payment</div><div class="btn b2">Proceed</div>
    </div></div>`;
  }
}

@customElement("task-bar")
class TaskBar extends LitElement {
  static styles = css`
    :host { display: flex; align-items: center; height: 24px; background: linear-gradient(#5b5a55, #403f3a); border-bottom: 1px solid #2b2a27; font: 14.600px/20px "Noto Sans", sans-serif; color: #dfdbd2; padding: 0 3px 0 1px; box-sizing: border-box; }
    * { box-sizing: border-box; }
    svg { display: block; flex: none; }
    .grip { margin: 0 2px 0 3px; }
    .task { width: 202px; height: 24px; flex: none; display: flex; align-items: center; gap: 8px; padding-left: 8px; border-left: 1px solid #44433f; white-space: nowrap; letter-spacing: -.100px; }
    .task.on { background: linear-gradient(#373632, #2f2e2b); }
    .end { border-left: 1px solid #44433f; height: 24px; flex: 1; display: flex; align-items: center; justify-content: flex-end; gap: 4px; }
    .cur { margin: 6px 184px 0 0; }
  `;
  render() {
    const img = icon(16, 11, svg`<rect width="16" height="11" fill="#eceae4"/><path d="M2 3h3M7 3h3M11 4h4M2 6h4M8 7h5M3 9h3" stroke="#b9b4a6"/>`);
    return html`
      ${icon(22, 22, svg`<rect x=".5" y=".5" width="21" height="20" rx="2" fill="#b050ae" stroke="#333"/><rect x="1" y="1" width="20" height="4" fill="#efeee6"/><path d="M1 5.500h20" stroke="#555a30"/><path d="M2 9h3v3H2zM2 14h3v3H2z" fill="#f1e4f2"/>`)}
      <span class="grip">${icon(5, 12, svg`<path d="M0 2.500h4M0 6.500h4M0 10.500h4" stroke="#2e2d2a"/>`)}</span>
      <div class="task">${chromium(15)}<span>Query Helper Functio…</span></div>
      <div class="task on">${firefox(16)}<span>Mockingbird - Untitle…</span></div>
      <div class="task">${img}<span>schema.jpg</span></div>
      <div class="task">${chromium(15)}<span>PHP Inventory System…</span></div>
      <div class="end">
        <svg class="cur" width="8" height="12" viewBox="0 0 8 12"><path d="M1 .5v9l2-1.500 1.300 3 1.400-.6-1.300-2.900H7z" fill="#fff" stroke="#000" stroke-width=".9"/></svg>
        ${icon(36, 22, svg`<path d="M0 0h35v11H18v11H0z" fill="#f9f5f1"/><rect x="1" y="1" width="15.500" height="9" fill="#f27842"/><rect x="17.500" y="1" width="16.500" height="9" fill="#ffb394"/><rect x="1" y="12" width="15.500" height="9" fill="#f27842"/><rect x="18" y="12" width="18" height="10" fill="#33322f"/>`)}
        ${icon(19, 22, svg`<path d="M1.500 4h16L16 21.500H3.500z" fill="#a2a29e" stroke="#777"/><path d="M4 7l4-1 2 3-4 2zM11 6l4 1-1 4-4-1zM5 12l4-1 1 4-4 2zM11 12l3 1v4l-4-1zM6 18l4-1 3 2-2 2H7z" fill="#e3e3e0"/><ellipse cx="9.500" cy="3.200" rx="8" ry="2.300" fill="#5e5d57" stroke="#cfcfcb"/>`)}
      </div>`;
  }
}

@customElement("app-root")
class AppRoot extends LitElement {
  static styles = css`
    :host { display: flex; flex-direction: column; width: 1680px; height: 1050px; overflow: hidden; background: #e0eaf4; }
    .main { flex: 1; min-height: 0; display: flex; }
  `;
  render() {
    return html`<browser-chrome></browser-chrome><editor-bars></editor-bars>
      <div class="main"><side-panel></side-panel><design-canvas></design-canvas></div><task-bar></task-bar>`;
  }
}
